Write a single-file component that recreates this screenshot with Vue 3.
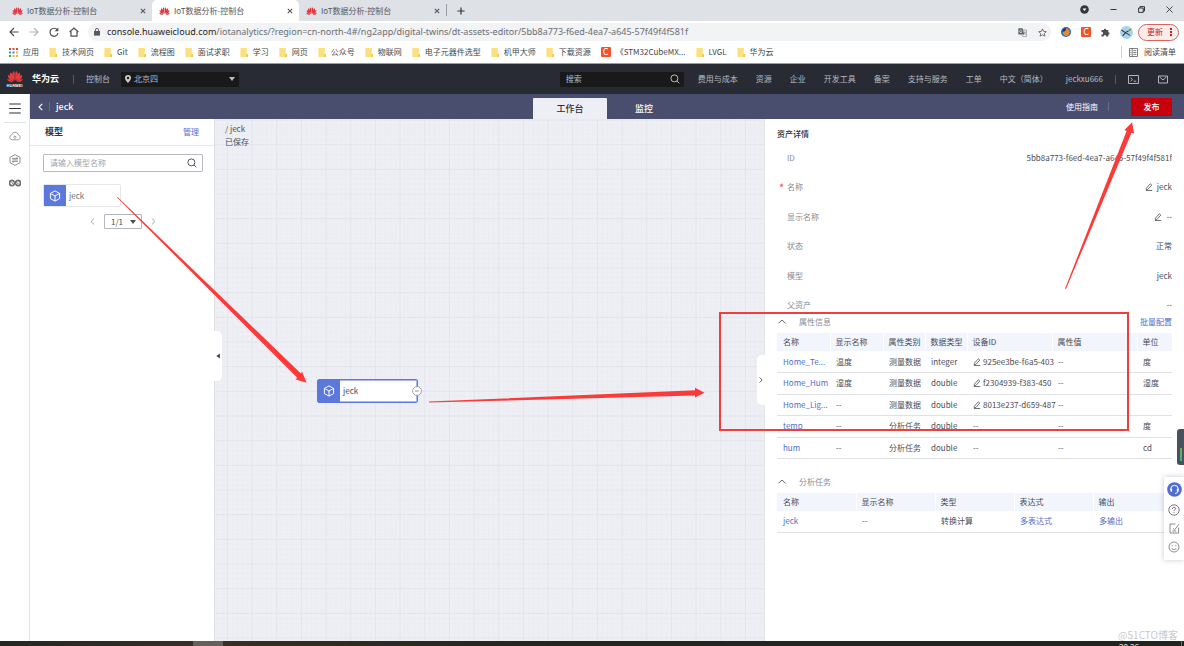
<script setup>
import { ref } from 'vue'

const tabs = [
  { id: 1, title: 'IoT数据分析-控制台', active: false },
  { id: 2, title: 'IoT数据分析-控制台', active: true },
  { id: 3, title: 'IoT数据分析-控制台', active: false }
]

const bookmarks = [
  { name: '应用', icon: 'apps' },
  { name: '技术网页', icon: 'folder' },
  { name: 'Git', icon: 'folder' },
  { name: '流程图', icon: 'folder' },
  { name: '面试求职', icon: 'folder' },
  { name: '学习', icon: 'folder' },
  { name: '网页', icon: 'folder' },
  { name: '公众号', icon: 'folder' },
  { name: '物联网', icon: 'folder' },
  { name: '电子元器件选型', icon: 'folder' },
  { name: '机甲大师', icon: 'folder' },
  { name: '下载资源', icon: 'folder' },
  { name: '《STM32CubeMX...', icon: 'csdn' },
  { name: 'LVGL', icon: 'folder' },
  { name: '华为云', icon: 'folder' }
]

const navLinks = ['费用与成本', '资源', '企业', '开发工具', '备案', '支持与服务', '工单', '中文（简体）', 'jeckxu666']

const details = [
  { label: 'ID', value: '5bb8a773-f6ed-4ea7-a645-57f49f4f581f' },
  { label: '名称', value: 'jeck', required: true, editable: true },
  { label: '显示名称', value: '--', editable: true },
  { label: '状态', value: '正常' },
  { label: '模型', value: 'jeck' },
  { label: '父资产', value: '--' }
]

const properties = [
  { name: 'Home_Te...', label: '温度', kind: '测量数据', type: 'integer', device: '925ee3be-f6a5-403', value: '--', unit: '度' },
  { name: 'Home_Hum', label: '湿度', kind: '测量数据', type: 'double', device: 'f2304939-f383-450', value: '--', unit: '湿度' },
  { name: 'Home_Lig...', label: '--', kind: '测量数据', type: 'double', device: '8013e237-d659-487', value: '--', unit: '' },
  { name: 'temp', label: '--', kind: '分析任务', type: 'double', device: '', value: '--', unit: '度' },
  { name: 'hum', label: '--', kind: '分析任务', type: 'double', device: '', value: '--', unit: 'cd' }
]

const search = ref('')
const modelSearch = ref('')
</script>

<template>
  <div class="screen">
    <svg class="defs" aria-hidden="true">
      <symbol id="petals" viewBox="0 0 32 24">
        <path d="M15.4 21C10 14 9 6 13.2 1.2c2.2 1 2.6 4 2.2 19.800z" />
        <path d="M14 21C7 16 3.600 9 6.800 4c3.200.6 5.400 5.600 7.200 17z" />
        <path d="M13 21.800C5 19 .6 14 2 9c3.600.6 7.600 5 11 12.800z" />
        <path d="M12.400 23C6 24 1.200 21 .4 17c4 0 8 2 12 6z" />
        <path d="M16.600 21c5.400-7 6.400-15 2.200-19.800-2.200 1-2.600 4-2.200 19.800z" />
        <path d="M18 21c7-5 10.400-12 7.200-17-3.200.6-5.400 5.600-7.200 17z" />
        <path d="M19 21.800c8-2.800 12.400-7.800 11-12.800-3.600.6-7.600 5-11 12.800z" />
        <path d="M19.600 23c6.400 1 11.200-2 12-6-4 0-8 2-12 6z" />
      </symbol>
      <symbol id="cube" viewBox="0 0 12 12">
        <path d="M6 .9l4.600 2.500v5.200L6 11.100 1.400 8.600V3.400zM1.400 3.400L6 6l4.600-2.600M6 6v5.100" fill="none" stroke="currentColor" stroke-width="1" stroke-linejoin="round" />
      </symbol>
      <symbol id="pencil" viewBox="0 0 8 8">
        <path d="M1.400 5.200L5.300.8l1.500 1.300-3.900 4.300-1.700.3zM.9 7.500h6.300" fill="none" stroke="currentColor" stroke-width=".8" stroke-linejoin="round" />
      </symbol>
      <symbol id="lens" viewBox="0 0 10 10">
        <path d="M4.400.9a3.500 3.500 0 100 7 3.500 3.500 0 000-7zM6.900 6.900l2.400 2.400" fill="none" stroke="currentColor" stroke-width="1" />
      </symbol>
      <symbol id="close" viewBox="0 0 6 6">
        <path d="M.8.8l4.400 4.400M5.200.8L.8 5.200" stroke="currentColor" stroke-width="1.100" />
      </symbol>
    </svg>

    <header class="browser">
      <div class="tab-strip">
        <div v-for="t in tabs" :key="t.id" class="tab" :class="{ active: t.active }">
          <svg class="favicon" viewBox="0 0 32 24"><use href="#petals" /></svg>
          <span class="tab-title">{{ t.title }}</span>
          <button class="icon-btn" aria-label="关闭标签页"><svg width="6" height="6"><use href="#close" /></svg></button>
        </div>
        <span class="tab-line"></span>
        <button class="icon-btn plus" aria-label="新标签页">
          <svg width="8" height="8" viewBox="0 0 8 8"><path d="M4 .4v7.200M.4 4h7.200" stroke="#33363a" stroke-width="1.200" /></svg>
        </button>
        <div class="window-controls">
          <button class="icon-btn" aria-label="标签搜索"><svg width="9" height="9" viewBox="0 0 9 9"><circle cx="4.500" cy="4.500" r="4.300" fill="#33363a" /><path d="M2.500 3.500h4L4.500 6z" fill="#fff" /></svg></button>
          <button class="icon-btn" aria-label="最小化"><svg width="7" height="7" viewBox="0 0 7 7"><path d="M.5 3.500h6" stroke="#222" stroke-width=".9" /></svg></button>
          <button class="icon-btn" aria-label="还原"><svg width="7" height="7" viewBox="0 0 7 7"><path d="M.6 2h4.600v4.400H.6zM2 2V.6h4.500V5H5.200" fill="none" stroke="#222" stroke-width=".9" /></svg></button>
          <button class="icon-btn" aria-label="关闭"><svg width="7" height="7" viewBox="0 0 7 7"><path d="M.5.5l6 6M6.500.5l-6 6" stroke="#222" stroke-width=".8" /></svg></button>
        </div>
      </div>

      <div class="address-row">
        <button class="icon-btn" aria-label="后退"><svg width="10" height="10" viewBox="0 0 10 10"><path d="M9.500 5H1M5 1L1 5l4 4" fill="none" stroke="#4c4f54" stroke-width="1.200" /></svg></button>
        <button class="icon-btn" aria-label="前进"><svg width="10" height="10" viewBox="0 0 10 10"><path d="M.5 5H9M5 1l4 4-4 4" fill="none" stroke="#b4b6ba" stroke-width="1.200" /></svg></button>
        <button class="icon-btn" aria-label="刷新"><svg width="10" height="10" viewBox="0 0 10 10"><path d="M8.300 2.900A4 4 0 109 6" fill="none" stroke="#4c4f54" stroke-width="1.200" /><path d="M9.300.6v3.600H5.700z" fill="#4c4f54" /></svg></button>
        <button class="icon-btn" aria-label="主页"><svg width="10" height="10" viewBox="0 0 10 10"><path d="M.6 5L5 1l4.400 4M2 4.400V9.200h6V4.400" fill="none" stroke="#4c4f54" stroke-width="1.200" /></svg></button>
        <div class="address">
          <svg width="6" height="8" viewBox="0 0 6 8"><path d="M0 3h6v4.600H0z" fill="#55585d" /><path d="M1.400 3.400V2a1.600 1.600 0 013.200 0v1.400" fill="none" stroke="#55585d" stroke-width=".9" /></svg>
          <div class="url" role="textbox" aria-label="地址" tabindex="0"><b>console.huaweicloud.com</b>/iotanalytics/?region=cn-north-4#/ng2app/digital-twins/dt-assets-editor/5bb8a773-f6ed-4ea7-a645-57f49f4f581f</div>
          <button class="icon-btn" aria-label="翻译"><svg width="9" height="9" viewBox="0 0 9 9"><path d="M.3.300h4.300l1.700 6.300H.3z" fill="#5f6368" /><path d="M5 2h3.600v6.600H4.600L4 6.800M5.800 4.200h2.400M7 3.600v.6c0 1-.8 2-1.400 2.400M6.200 5l1.600 1.800" fill="none" stroke="#777a7f" stroke-width=".6" /><path d="M3.800 2.600a1.300 1.300 0 10.200 1.200H2.800" fill="none" stroke="#fff" stroke-width=".6" /></svg></button>
          <button class="icon-btn" aria-label="收藏"><svg width="9" height="9" viewBox="0 0 9 9"><path d="M4.500.9l1.100 2.500 2.700.3-2 1.800.6 2.700-2.400-1.400-2.400 1.400.6-2.700-2-1.800 2.700-.3z" fill="none" stroke="#55585d" stroke-width=".8" /></svg></button>
        </div>
        <div class="extensions">
          <button class="icon-btn" aria-label="扩展一"><svg width="10" height="10" viewBox="0 0 10 10"><circle cx="5" cy="5" r="5" fill="#2765b5" /><path d="M1.600 6c.2-2 1.400-2.600 2.400-4C6 1 8 2 8.600 4c.4 2-.2 4-2 4.800-2 .6-4.400-.4-5-2.800z" fill="#e08a3c" /><path d="M1.800 4.600C3 5 4.600 4 5.200 1.800 3.600 1 1.800 2.600 1.800 4.600z" fill="#3a2a22" /></svg></button>
          <button class="csdn icon-btn" aria-label="CSDN">C</button>
          <button class="icon-btn" aria-label="扩展程序"><svg width="9" height="9" viewBox="0 0 9 9"><path d="M.5 2h2.300a1.200 1.200 0 112.400 0H7.300v2.200a1.200 1.200 0 110 2.400v2H5.200a1.300 1.300 0 10-2.500 0H.5V6.300a1.200 1.200 0 100-2.300z" fill="#4c4f54" /></svg></button>
          <button class="icon-btn" aria-label="个人资料"><svg width="13" height="13" viewBox="0 0 13 13"><circle cx="6.500" cy="6.500" r="6.500" fill="#a5d4f3" /><path d="M1.500 4l4 2.600L11 3.200M5.500 6.600L2.600 10M5.500 6.600l4.600 2.800" stroke="#343a2c" stroke-width="1.100" fill="none" /><path d="M8 4.800l3.500-2" stroke="#c0a23c" stroke-width="1" /></svg></button>
          <button class="update">更新 <i></i></button>
        </div>
      </div>

      <nav class="bookmarks" aria-label="书签">
        <a v-for="b in bookmarks" :key="b.name" href="#" class="bookmark">
          <svg v-if="b.icon === 'apps'" width="9" height="9" viewBox="0 0 9 9">
            <path d="M0 0h2v2H0zM3.500 0h2v2h-2zM7 0h2v2H7z" fill="#e0483e" /><path d="M0 3.500h2v2H0zM0 7h2v2H0z" fill="#2fa45a" /><path d="M3.500 3.500h2v2h-2z" fill="#3f7fe8" /><path d="M7 3.500h2v2H7zM3.500 7h2v2h-2zM7 7h2v2H7z" fill="#f0b429" />
          </svg>
          <span v-else-if="b.icon === 'csdn'" class="csdn">C</span>
          <svg v-else width="8" height="9" viewBox="0 0 8 9"><path d="M.4 0h6.400v6H8v3H.4z" fill="#fcdf7f" /><path d="M6.600 6H8v3H5.800z" fill="#efc95a" /></svg>
          <span>{{ b.name }}</span>
        </a>
        <a href="#" class="bookmark reading">
          <svg width="9" height="9" viewBox="0 0 9 9"><path d="M.5.5h8v8h-8zM3.200.5v8M4.300 2.600h3M4.300 4.500h3M4.300 6.400h3M1.400 2.600h.8M1.400 4.500h.8M1.400 6.400h.8" fill="none" stroke="#5a5d62" stroke-width=".8" /></svg>
          <span>阅读清单</span>
        </a>
      </nav>
    </header>

    <div class="cloud-bar">
      <a href="#" class="brand">
        <span class="brand-mark">
          <svg width="16" height="13" viewBox="0 0 32 24"><use href="#petals" /></svg>
          <small>HUAWEI</small>
        </span>
        <strong>华为云</strong>
      </a>
      <span class="divider"></span>
      <a href="#" class="console">控制台</a>
      <label class="region">
        <svg width="6" height="8" viewBox="0 0 6 8"><path d="M3 0a3 3 0 013 3c0 2-3 5-3 5S0 5 0 3a3 3 0 013-3zm0 1.800a1.200 1.200 0 100 2.400 1.200 1.200 0 000-2.400z" fill="#c9cbd0" fill-rule="evenodd" /></svg>
        <select aria-label="区域"><option>北京四</option></select>
        <i class="caret"></i>
      </label>
      <label class="cloud-search">
        <input v-model="search" type="text" placeholder="搜索" aria-label="搜索" />
        <svg width="10" height="10"><use href="#lens" /></svg>
      </label>
      <nav class="cloud-nav">
        <a v-for="n in navLinks" :key="n" href="#">{{ n }}</a>
      </nav>
      <span class="divider"></span>
      <div class="cloud-icons">
        <button class="icon-btn" aria-label="命令行"><svg width="11" height="9" viewBox="0 0 11 9"><path d="M.5.5h10v8H.5zM2.600 2.800l1.800 1.700-1.800 1.700M5.600 6.200h2.600" fill="none" stroke="#c3c5ca" stroke-width=".9" /></svg></button>
        <button class="icon-btn" aria-label="消息"><svg width="10" height="9" viewBox="0 0 10 9"><path d="M.5 1h9v7h-9zM1.600 2L5 5l3.400-3" fill="none" stroke="#c3c5ca" stroke-width=".9" /></svg></button>
      </div>
    </div>

    <div class="workspace">
      <aside class="rail">
        <button class="icon-btn menu" aria-label="菜单"><svg width="12" height="11" viewBox="0 0 12 11"><path d="M.2 1h11.600M.2 5.500h11.600M.2 10h11.600" stroke="#30323a" stroke-width="1.100" /></svg></button>
        <button class="icon-btn" aria-label="云服务"><svg width="12" height="10" viewBox="0 0 12 10"><path d="M3 8.800a2.500 2.500 0 01-.4-4.900 3.500 3.500 0 016.800 0A2.500 2.500 0 019 8.800zM6 8.400V5M4.400 6.400L6 4.800l1.600 1.600" fill="none" stroke="#8a8c92" stroke-width=".8" /></svg></button>
        <button class="icon-btn" aria-label="资产"><svg width="12" height="12" viewBox="0 0 12 12"><path d="M6 .6l5 2.700v5.400l-5 2.700-5-2.700V3.300zM3 4.400h5.800L7.400 3.200M9 7.400H3.200l1.400 1.200M3.400 5.900h5.200" fill="none" stroke="#73757b" stroke-width=".8" /></svg></button>
        <button class="icon-btn" aria-label="物联"><svg width="12" height="8" viewBox="0 0 12 8"><path d="M6 4C4.800 1.800 4.200 1.300 3.200 1.300a2.600 2.600 0 000 5.400C4.600 6.700 5.200 5.400 6 4s1.600-2.700 2.800-2.700a2.600 2.600 0 010 5.400C7.800 6.700 7.200 6 6 4z" fill="none" stroke="#6a6c72" stroke-width="1.700" /><path d="M2.600 3.200l1.600 1.800M7.800 3.200l1.600 1.800" stroke="#6a6c72" stroke-width="1" /></svg></button>
      </aside>

      <div class="editor">
        <div class="title-bar">
          <div class="crumb">
            <button class="icon-btn" aria-label="返回"><svg width="5" height="8" viewBox="0 0 5 8"><path d="M4.300.8L1 4l3.300 3.200" fill="none" stroke="#fff" stroke-width="1.100" /></svg></button>
            <span class="divider"></span>
            <strong>jeck</strong>
          </div>
          <div class="modes">
            <button class="mode on">工作台</button>
            <button class="mode">监控</button>
          </div>
          <div class="actions">
            <a href="#">使用指南</a>
            <span class="divider"></span>
            <button class="publish">发布</button>
          </div>
        </div>

        <div class="panes">
          <section class="models">
            <div class="models-head">
              <h2>模型</h2>
              <a href="#">管理</a>
            </div>
            <label class="model-search">
              <input v-model="modelSearch" type="text" placeholder="请输入模型名称" aria-label="请输入模型名称" />
              <svg width="10" height="10"><use href="#lens" /></svg>
            </label>
            <div class="model-card">
              <span class="cube"><svg width="12" height="12"><use href="#cube" /></svg></span>
              <span>jeck</span>
            </div>
            <div class="pager">
              <button class="icon-btn" aria-label="上一页"><svg width="5" height="7" viewBox="0 0 5 7"><path d="M4 .6L1 3.500l3 2.900" fill="none" stroke="#9a9ca3" stroke-width=".9" /></svg></button>
              <label class="page-select">
                <select aria-label="页码"><option>1/1</option></select>
                <i class="caret"></i>
              </label>
              <button class="icon-btn" aria-label="下一页"><svg width="5" height="7" viewBox="0 0 5 7"><path d="M1 .6l3 2.900-3 2.900" fill="none" stroke="#9a9ca3" stroke-width=".9" /></svg></button>
            </div>
            <button class="fold fold-left" aria-label="收起模型"><svg width="4" height="6" viewBox="0 0 4 6"><path d="M3.800.4v5.200L.4 3z" fill="#3c3e45" /></svg></button>
          </section>

          <section class="canvas">
            <svg class="grid" aria-hidden="true">
              <defs>
                <pattern id="minor" x="11.900" y=".5" width="4.933" height="4.933" patternUnits="userSpaceOnUse">
                  <path d="M0 0h4.933M0 0v4.933" stroke="#e9eaef" stroke-width="1" fill="none" />
                </pattern>
                <pattern id="major" x="11.900" y=".5" width="24.667" height="24.667" patternUnits="userSpaceOnUse">
                  <path d="M0 .5h24.667M.5 0v24.667" stroke="#e4e5ea" stroke-width="1" fill="none" />
                </pattern>
              </defs>
              <rect width="100%" height="100%" fill="url(#minor)" />
              <rect width="100%" height="100%" fill="url(#major)" />
            </svg>
            <div class="status">
              <span>/ jeck</span>
              <span>已保存</span>
            </div>
            <div class="node">
              <span class="cube"><svg width="12" height="12"><use href="#cube" /></svg></span>
              <span>jeck</span>
              <button class="icon-btn node-toggle" aria-label="收起"><svg width="10" height="10" viewBox="0 0 10 10"><circle cx="5" cy="5" r="4.400" fill="#fff" stroke="#8c8e95" stroke-width=".8" /><path d="M3 5h4" stroke="#777" stroke-width=".8" /></svg></button>
            </div>
          </section>

          <section class="details">
            <button class="fold fold-right" aria-label="收起详情"><svg width="4" height="6" viewBox="0 0 4 6"><path d="M.7.5L3.200 3 .7 5.500" fill="none" stroke="#44464d" stroke-width=".9" /></svg></button>
            <h2>资产详情</h2>
            <div class="facts-view">
              <dl class="facts">
                <div v-for="d in details" :key="d.label" class="fact">
                  <dt :class="{ required: d.required }">{{ d.label }}</dt>
                  <dd>
                    <button v-if="d.editable" class="icon-btn" :aria-label="'编辑' + d.label"><svg width="8" height="8"><use href="#pencil" /></svg></button>
                    <span>{{ d.value }}</span>
                  </dd>
                </div>
              </dl>
            </div>

            <div class="section-head">
              <button class="icon-btn" aria-label="折叠属性信息"><svg width="8" height="5" viewBox="0 0 8 5"><path d="M.5 4.300L4 1l3.500 3.300" fill="none" stroke="#55585f" stroke-width=".9" /></svg></button>
              <h3>属性信息</h3>
              <a href="#">批量配置</a>
            </div>
            <table class="props">
              <colgroup><col class="w-name" /><col class="w-name" /><col class="w-kind" /><col class="w-kind" /><col class="w-wide" /><col class="w-wide" /><col /></colgroup>
              <thead>
                <tr><th>名称</th><th>显示名称</th><th>属性类别</th><th>数据类型</th><th>设备ID</th><th>属性值</th><th>单位</th></tr>
              </thead>
              <tbody>
                <tr v-for="p in properties" :key="p.name">
                  <td><a href="#">{{ p.name }}</a></td>
                  <td>{{ p.label }}</td>
                  <td>{{ p.kind }}</td>
                  <td>{{ p.type }}</td>
                  <td>
                    <div v-if="p.device" class="device">
                      <button class="icon-btn" aria-label="编辑设备ID"><svg width="8" height="8"><use href="#pencil" /></svg></button>
                      <span>{{ p.device }}</span>
                    </div>
                    <template v-else>--</template>
                  </td>
                  <td>{{ p.value }}</td>
                  <td>{{ p.unit }}</td>
                </tr>
              </tbody>
            </table>

            <div class="section-head tasks-head">
              <button class="icon-btn" aria-label="折叠分析任务"><svg width="8" height="5" viewBox="0 0 8 5"><path d="M.5 4.300L4 1l3.500 3.300" fill="none" stroke="#55585f" stroke-width=".9" /></svg></button>
              <h3>分析任务</h3>
            </div>
            <table class="tasks">
              <thead>
                <tr><th>名称</th><th>显示名称</th><th>类型</th><th>表达式</th><th>输出</th></tr>
              </thead>
              <tbody>
                <tr><td><a href="#">jeck</a></td><td>--</td><td>转换计算</td><td><a href="#">多表达式</a></td><td><a href="#">多输出</a></td></tr>
              </tbody>
            </table>
          </section>
        </div>
      </div>
    </div>

    <footer class="taskbar">
      <span class="task-active"></span>
      <span class="clock">20:26</span>
      <span class="desktop-edge"></span>
    </footer>

    <div class="meter"><i></i></div>
    <div class="helper">
      <button class="icon-btn" aria-label="客服"><svg width="15" height="15" viewBox="0 0 15 15"><circle cx="7.500" cy="7.500" r="7.300" fill="#526ecc" /><path d="M3.800 8V7a3.700 3.700 0 017.400 0v1M11 8.600c0 1.800-1.200 2.800-3 2.800" fill="none" stroke="#fff" stroke-width="1" /><path d="M3.200 6.800h1.900v3H3.800zM11.800 6.800H9.900v3h1.300z" fill="#fff" /></svg></button>
      <button class="icon-btn" aria-label="帮助"><svg width="12" height="12" viewBox="0 0 12 12"><circle cx="6" cy="6" r="5.200" fill="none" stroke="#55585f" stroke-width=".8" /><path d="M4.400 4.900c0-2.200 3.300-2 3.200-.2 0 1-1.600 1.100-1.600 2.400M6 8.100v.9" fill="none" stroke="#55585f" stroke-width=".9" /></svg></button>
      <button class="icon-btn" aria-label="反馈"><svg width="11" height="11" viewBox="0 0 11 11"><path d="M6.400 1H1v9h8.600V4.600M4 5.400l1.600 1.400L10 1.200M3.400 8h3.800" fill="none" stroke="#6b6e75" stroke-width=".8" /></svg></button>
      <button class="icon-btn" aria-label="满意度"><svg width="12" height="12" viewBox="0 0 12 12"><circle cx="6" cy="6" r="5" fill="none" stroke="#6b6e75" stroke-width=".8" /><path d="M3.600 7c.8 2 4 2 4.800 0M3.600 4.900h1.200M7.200 4.900h1.200" fill="none" stroke="#6b6e75" stroke-width=".8" /></svg></button>
    </div>

    <svg class="marks" viewBox="0 0 1184 646" aria-hidden="true">
      <path d="M117 197.400L297.200 377.700l-1.600 1.700 11 3.300-4.500-11-1.200 1.800L117.600 196.900z" />
      <path d="M429 401.600l266-11.300v-2.600l9.600 5-9.600 4.900v-2.100L429 402.600z" />
      <path d="M1065 288.700l61.600-157.700-2.200-1 7.700-7.800 2 11.400-2.600-.9L1066 289z" />
      <path d="M720 313h408v117H720z" class="frame" />
    </svg>
    <div class="watermark">@51CTO博客</div>
  </div>
</template>

<style>
html,
body {
  margin: 0;
  overflow: hidden;
}
</style>

<style scoped>
.screen {
  position: relative;
  display: flex;
  flex-direction: column;
  min-height: 100vh;
  overflow: hidden;
  background: #fff;
  color: #4a4d57;
  font-family: "Noto Sans CJK SC", "Noto Sans", sans-serif;
  font-size: 8px;
  line-height: 12px;
}
.screen * { box-sizing: border-box; }
a { color: inherit; text-decoration: none; }
button, input, select { font: inherit; color: inherit; }
svg { display: block; flex: none; }
h2, h3, dl, dd { margin: 0; font-size: 8px; }
.defs { position: absolute; width: 0; height: 0; }
.icon-btn {
  display: flex;
  align-items: center;
  justify-content: center;
  flex: none;
  padding: 0;
  border: 0;
  background: none;
}

.tab-strip { display: flex; align-items: stretch; height: 21px; padding-left: 5px; background: #dee1e6; }
.tab { display: flex; align-items: center; width: 147px; padding: 0 6px 0 7px; color: #54575c; }
.tab.active { background: #fff; border-radius: 5px 5px 0 0; }
.favicon { width: 11px; height: 10px; fill: #e2333d; }
.tab-title { flex: 1; margin-left: 4px; white-space: nowrap; }
.tab-line { width: 1px; height: 12px; margin: 4px 0 0; background: #9a9da3; }
.plus { margin-left: 10px; }
.window-controls { display: flex; gap: 21px; margin: 0 11px 2px auto; }

.address-row { display: flex; align-items: center; gap: 10px; height: 22px; padding: 0 5px 0 9px; }
.address { display: flex; flex: 1; align-items: center; gap: 11px; height: 18px; margin-left: -1px; padding: 0 4px 0 6px; border-radius: 9px; background: #f1f3f4; }
.url { flex: 1; margin-left: -4px; overflow: hidden; white-space: nowrap; color: #6b6e73; font-family: "Noto Sans", sans-serif; font-size: 9px; }
.url b { font-weight: 400; color: #222428; }
.extensions { display: flex; align-items: center; gap: 10px; }
.csdn { width: 10px; height: 10px; border-radius: 1px; background: #f4502c; color: #fff; font-size: 9px; line-height: 10px; text-align: center; }
.update { display: flex; align-items: center; justify-content: space-between; width: 41px; height: 17px; margin-left: -5px; padding: 0 6px 0 8px; border: 1px solid #d9625c; border-radius: 9px; background: #fcecea; color: #c5221f; line-height: 12px; }
.update i { width: 2px; height: 8px; background: repeating-linear-gradient(#c5221f 0 2px, transparent 2px 3px); }

.bookmarks { display: flex; align-items: center; gap: 10px; height: 21px; padding: 0 8px 2px 9px; border-bottom: 1px solid #9b9da1; color: #44474c; white-space: nowrap; }
.bookmark { display: flex; align-items: center; gap: 5px; }
.reading { margin-left: auto; padding-left: 7px; border-left: 1px solid #cfd1d5; gap: 6px; }

.cloud-bar { display: flex; align-items: center; height: 30px; padding: 0 16px 0 6px; background: #282b33; color: #b9bbc1; white-space: nowrap; }
.brand { display: flex; align-items: center; gap: 9px; color: #fff; }
.brand strong { font-size: 9px; }
.brand-mark { display: flex; flex-direction: column; align-items: center; width: 17px; fill: #ea3a3c; }
.brand-mark small { font-size: 4px; line-height: 5px; font-weight: 700; }
.divider { width: 1px; height: 9px; background: #565963; }
.brand + .divider { margin: 0 12px 0 14px; }
.region { display: flex; align-items: center; width: 118px; height: 15px; margin-left: 11px; padding: 0 4px; border-radius: 1px; background: #191919; }
.region select { flex: 1; margin: 0; padding: 0 3px; border: 0; appearance: none; background: none; line-height: 12px; }
.caret { width: 0; height: 0; border: 3px solid transparent; border-top: 4px solid currentColor; border-bottom: 0; pointer-events: none; }
.cloud-search { display: flex; align-items: center; width: 124px; height: 15px; margin: 0 14px 0 auto; padding: 0 4px 0 6px; border-radius: 1px; background: #191919; }
.cloud-search input { flex: 1; min-width: 0; padding: 0; border: 0; outline: 0; background: none; }
.cloud-search input::placeholder { color: #b9bbc1; opacity: 1; }
.cloud-nav { display: flex; gap: 18px; }
.cloud-nav + .divider { margin: 0 12px; }
.cloud-icons { display: flex; gap: 19px; }

.workspace { display: flex; flex: 1; }
.rail { display: flex; flex-direction: column; align-items: center; gap: 13px; width: 30px; border-right: 1px solid #e4e5e8; }
.menu { width: 22px; height: 29px; margin-bottom: -5px; border-bottom: 1px solid #e2e3e6; }
.editor { display: flex; flex: 1; flex-direction: column; min-width: 0; }
.title-bar { display: grid; grid-template-columns: 1fr auto 1fr; height: 25px; padding: 0 8px; background: #494e6f; color: #fff; }
.crumb { display: flex; align-items: center; gap: 6px; }
.crumb strong { font-size: 9px; font-weight: 500; }
.title-bar .divider { background: #686d8c; }
.modes { display: flex; align-items: flex-end; }
.mode { width: 74px; height: 21px; padding: 0; border: 0; border-radius: 1px 1px 0 0; background: none; font-weight: 500; font-size: 9px; }
.mode.on { background: #eeeff5; color: #2b2e3a; }
.actions { display: flex; align-items: center; justify-content: flex-end; gap: 10px; padding-right: 4px; }
.publish { width: 41px; height: 18px; margin-left: 12px; padding: 0; border: 0; border-radius: 1px; background: #c7000b; font-weight: 500; }

.panes { display: flex; flex: 1; }
.models { position: relative; width: 185px; border-right: 1px solid #dfe0e5; }
.models-head { display: flex; align-items: center; justify-content: space-between; height: 27px; padding: 0 15px; border-bottom: 1px solid #e6e7ea; }
.models-head h2 { color: #33363f; font-size: 9px; }
.models a, .details a { color: #526ecc; }
.model-search { display: flex; align-items: center; height: 18px; margin: 8px 11px 0 13px; padding: 0 5px 0 6px; border: 1px solid #b9bbc2; border-radius: 1px; color: #55585f; }
.model-search input { flex: 1; min-width: 0; padding: 0; border: 0; outline: 0; background: none; }
.model-search input::placeholder { color: #a2a4ab; opacity: 1; }
.model-card, .node { display: flex; align-items: center; gap: 3px; background: #fff; }
.model-card { width: 78px; height: 23px; margin: 12px 0 0 13px; border: 1px solid #e6e7eb; border-radius: 2px; color: #6a6d75; }
.cube { display: flex; align-items: center; justify-content: center; align-self: stretch; width: 22px; background: #5b78dd; color: #fff; }
.pager { display: flex; align-items: center; gap: 9px; margin: 7px 0 0 60px; }
.page-select { display: flex; align-items: center; width: 38px; height: 15px; padding: 0 5px 0 6px; border: 1px solid #b4b6bd; border-radius: 1px; }
.page-select select { flex: 1; min-width: 0; padding: 0; border: 0; appearance: none; background: none; line-height: 12px; }
.fold { position: absolute; display: flex; align-items: center; justify-content: center; width: 8px; height: 50px; padding: 0; border: 0; background: #fff; }
.fold-left { top: 212px; right: -8px; border-radius: 0 5px 5px 0; z-index: 1; }
.fold-right { top: 236px; left: -8px; border-radius: 5px 0 0 5px; }

.canvas { position: relative; flex: 1; min-width: 0; background: #eeeff4; }
.grid { position: absolute; inset: 0; width: 100%; height: 100%; }
.status { position: relative; display: flex; flex-direction: column; gap: 1px; padding: 4px 10px; }
.node { position: absolute; top: 260px; left: 102px; width: 101px; height: 24px; border: 1px solid #5b78dd; border-radius: 2px; box-shadow: inset 0 0 0 1px #a9b8ee; }
.node-toggle { position: absolute; right: -5px; }

.details { position: relative; width: 420px; padding: 9px 12px; border-left: 1px solid #e3e4e9; }
.details h2 { color: #2e313a; font-weight: 500; }
.facts-view { height: 167px; margin-top: 3px; overflow: hidden; }
.facts { display: flex; flex-direction: column; height: 177px; }
.fact { display: flex; flex: 1; align-items: center; justify-content: space-between; }
dt { position: relative; margin-left: 10px; color: #8a8c93; }
.required::before { content: "*"; position: absolute; left: -8px; color: #f04a41; font-size: 11px; }
dd { display: flex; align-items: center; gap: 4px; }
.section-head { display: flex; align-items: center; height: 23px; padding: 0 0 0 1px; }
.section-head h3 { margin-left: 13px; color: #8a8c93; font-weight: 400; }
.section-head a { margin-left: auto; }
.tasks-head { margin: 11px 0 0; }
table { width: 100%; table-layout: fixed; border-collapse: collapse; }
.props { height: 126px; }
.w-name { width: 53px; }
.w-kind { width: 42px; }
.w-wide { width: 85px; }
th, td { padding: 0 0 0 6px; text-align: left; white-space: nowrap; }
th { height: 18px; background: #f2f5fc; font-weight: 400; color: #464955; }
th + th { border-left: 1px solid #fff; padding-left: 5px; }
td { height: 21px; border-bottom: 1px solid #dfe1e6; }
.device { display: flex; gap: 2px; align-items: center; }

.taskbar { display: flex; height: 5px; background: linear-gradient(90deg, #24281f, #3a2e24 17%, #24261d 45%, #20251e); }
.task-active { width: 30px; margin-left: 193px; background: #666057; }
.clock { height: 3px; margin-left: auto; padding-top: 2px; color: #fff; line-height: 8px; }
.desktop-edge { width: 1px; margin: 0 2px 0 42px; background: #6a6d66; }

.helper { position: absolute; top: 477px; right: 0; display: flex; flex-direction: column; align-items: center; gap: 7px; width: 20px; padding: 5px 0 7px; background: #fff; box-shadow: 0 0 5px rgba(40, 45, 60, .25); }
.meter { position: absolute; top: 429px; right: 0; display: flex; align-items: flex-end; width: 7px; height: 36px; padding: 4px 0 4px 3px; border-radius: 3px 0 0 3px; background: #4b505e; }
.meter i { width: 2px; height: 13px; background: linear-gradient(#7aa84c, #3fb58c); }
.marks { position: absolute; top: 0; left: 0; width: 1184px; height: 646px; fill: #fb3b3a; pointer-events: none; }
.frame { fill: none; stroke: #f23d3d; stroke-width: 2; }
.watermark { position: absolute; right: 6px; bottom: 4px; color: #c9cacc; font-size: 10px; line-height: 14px; }
</style>
